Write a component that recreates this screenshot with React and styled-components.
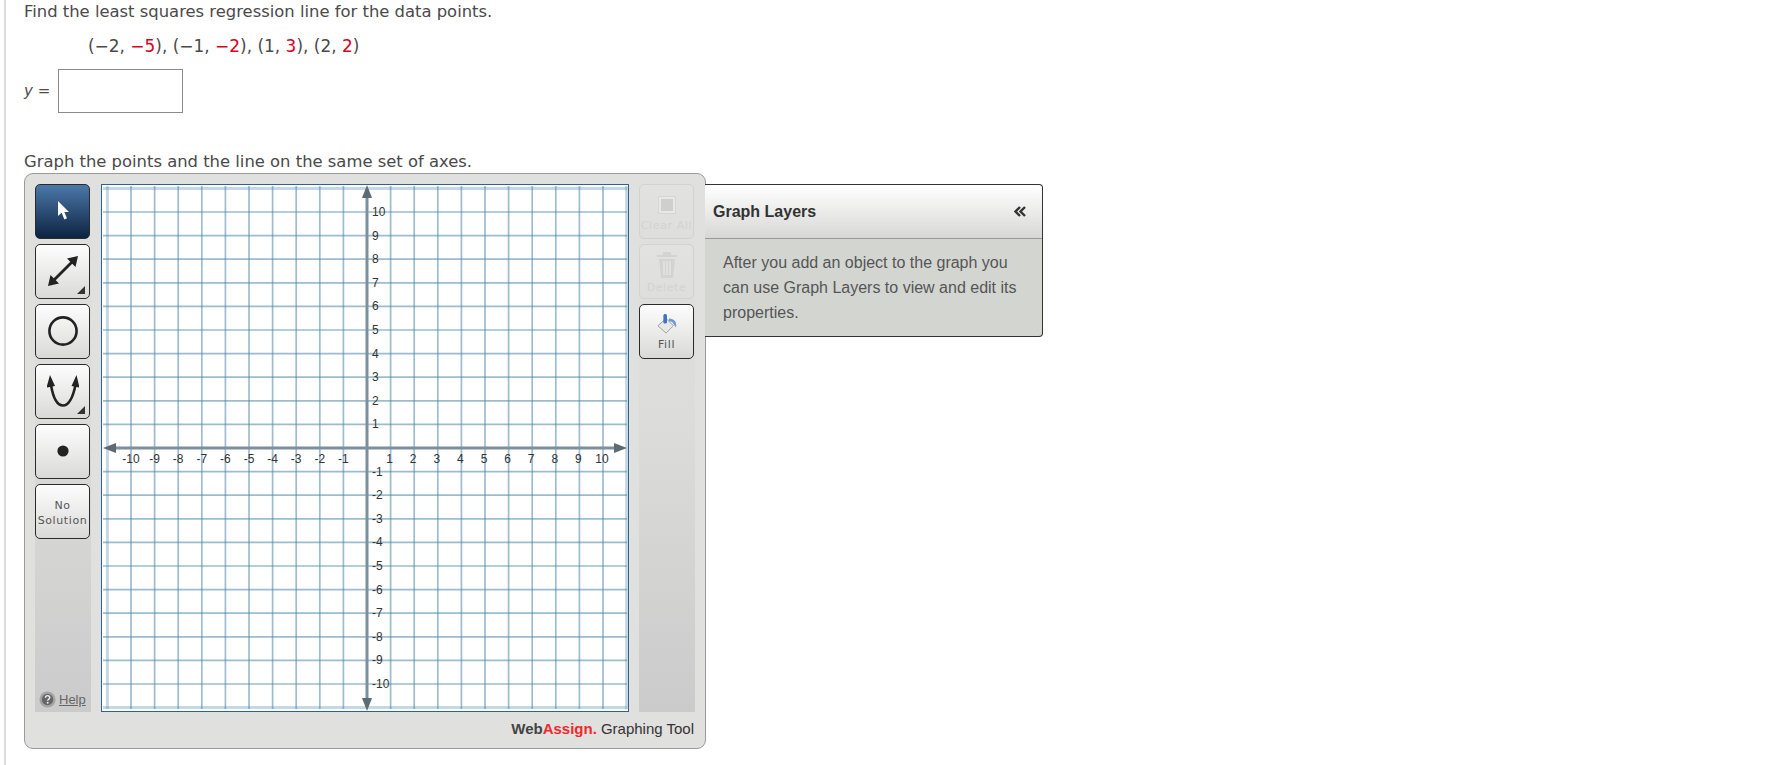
import React from 'react'
import styled, { createGlobalStyle } from 'styled-components'

const UNIT = 23.6
const ORIGIN_X = 265
const ORIGIN_Y = 263
const TICKS = [-10, -9, -8, -7, -6, -5, -4, -3, -2, -1, 1, 2, 3, 4, 5, 6, 7, 8, 9, 10]
const LINES = [-11, ...TICKS, 11]

const GlobalStyle = createGlobalStyle`
  html, body {
    margin: 0;
    background: #fff;
  }
`

const Page = styled.div`
  box-sizing: border-box;
  min-height: 765px;
  margin-left: 4px;
  padding-left: 18px;
  border-left: 2px solid #dcdcdc;
  font-family: "DejaVu Sans", Verdana, sans-serif;
  font-size: 16.4px;
  color: #4a4a4a;
`

const Question = styled.p`
  margin: 0;
  line-height: 22px;
`

const FirstQuestion = styled(Question)`
  padding-top: 1px;
`

const MathLine = styled.div`
  margin-top: 12px;
  padding-left: 64px;
  font-size: 16.95px;
  line-height: 22px;
`

const Red = styled.span`
  color: #d8001c;
`

const AnswerRow = styled.div`
  display: flex;
  align-items: center;
  gap: 8px;
  margin-top: 12px;
  height: 44px;
`

const Italic = styled.span`
  font-size: 15px;
  line-height: 22px;
  & i {
    font-family: "DejaVu Sans", sans-serif;
  }
`

const AnswerInput = styled.input`
  box-sizing: border-box;
  width: 125px;
  height: 44px;
  padding: 0;
  background: #fff;
  border: 1px solid #8a8a8a;
`

const GraphPrompt = styled(Question)`
  margin-top: 38px;
`

const Tool = styled.div`
  display: flex;
  align-items: flex-start;
`

const Panel = styled.div`
  box-sizing: border-box;
  width: 682px;
  height: 576px;
  padding: 10px 10px 0 10px;
  background: #e0e0de;
  border: 1px solid #9a9a9a;
  border-radius: 9px;
`

const Workspace = styled.div`
  display: flex;
  gap: 10px;
`

const ToolColumn = styled.div`
  display: flex;
  flex-direction: column;
  gap: 5.5px;
  width: 56px;
  height: 528px;
  flex: none;
  position: relative;
  background: linear-gradient(#e0e0de 0%, #dcdcdb 45%, #cbcbcb 100%);
`

const ToolButton = styled.button`
  box-sizing: border-box;
  position: relative;
  display: flex;
  flex-direction: column;
  align-items: center;
  justify-content: ${p => (p.$top === undefined ? 'center' : 'flex-start')};
  width: 55px;
  height: 54.5px;
  padding: ${p => p.$top || 0}px 0 0;
  border: 1px solid ${p => (p.$disabled ? '#d2d2d1' : '#2b2b2b')};
  border-radius: 5px;
  background: ${p =>
    p.$active
      ? 'linear-gradient(#4c78a9, #0c2341)'
      : p.$disabled
        ? 'linear-gradient(#e2e2e0, #dededc)'
        : 'linear-gradient(#fdfdfd, #d9dad8)'};
  font-family: "DejaVu Sans", Verdana, sans-serif;
  font-size: 11px;
  letter-spacing: 0.6px;
  line-height: 15px;
  color: ${p => (p.$disabled ? '#d3d3d2' : '#555')};
`

const ButtonLabel = styled.span`
  margin-top: ${p => p.$gap || 0}px;
  white-space: nowrap;
`

const SolutionText = styled.span`
  position: relative;
  top: 1.5px;
`

const Corner = styled.span`
  position: absolute;
  right: 4px;
  bottom: 4px;
  width: 0;
  height: 0;
  border-left: 8px solid transparent;
  border-bottom: 8px solid #333;
`

const Help = styled.div`
  position: absolute;
  left: 4px;
  bottom: 4px;
  display: flex;
  align-items: center;
  gap: 3px;
  font-family: "Liberation Sans", Arial, sans-serif;
  font-size: 13px;
  color: #666;
  text-decoration: underline;
`

const Graph = styled.svg`
  box-sizing: border-box;
  display: block;
  flex: none;
  width: 528px;
  height: 528px;
  background: #fff;
  border: 1px solid #2a6496;
`

const SideColumn = styled(ToolColumn)`
  align-items: flex-start;
`

const ToolFooter = styled.div`
  display: flex;
  justify-content: flex-end;
  gap: 4px;
  margin-top: 7px;
  padding-right: 1px;
  font-family: "Liberation Sans", Arial, sans-serif;
  font-size: 15px;
  line-height: 20px;
  color: #333;
`

const Brand = styled.b`
  color: #444;
  & span {
    color: #f0282d;
  }
`

const Layers = styled.div`
  box-sizing: border-box;
  width: 338px;
  margin-top: 11px;
  margin-left: -1px;
  border: 1px solid #333;
  border-left: 0;
  border-radius: 0 4px 4px 0;
  background: #d3d5d1;
  font-family: "Liberation Sans", Arial, sans-serif;
`

const LayersHeader = styled.div`
  display: flex;
  align-items: center;
  justify-content: space-between;
  box-sizing: border-box;
  height: 54px;
  padding: 0 16px 0 8px;
  background: linear-gradient(#fff, #d7d8d6);
  border-bottom: 1px solid #999;
  border-radius: 0 4px 0 0;
  font-size: 16px;
  font-weight: bold;
  color: #333;
`

const LayersBody = styled.div`
  padding: 11px 16px 11px 18px;
  font-size: 16px;
  line-height: 25px;
  color: #555;
`

const Term = ({ x, y }) => (
  <>
    ({x}, <Red>{y}</Red>)
  </>
)

const GridChart = () => (
  <Graph viewBox="0 0 526 526">
    {LINES.map(n => (
      <line
        key={`v${n}`}
        x1={ORIGIN_X + n * UNIT}
        x2={ORIGIN_X + n * UNIT}
        y1="1"
        y2="524"
        stroke="#4a86a8"
        strokeOpacity={Math.abs(n) === 11 ? 0.32 : 0.55}
        strokeWidth={Math.abs(n) === 11 ? 3 : 1.7}
      />
    ))}
    {LINES.map(n => (
      <line
        key={`h${n}`}
        x1="1"
        x2="525"
        y1={ORIGIN_Y + n * UNIT}
        y2={ORIGIN_Y + n * UNIT}
        stroke="#4a86a8"
        strokeOpacity={Math.abs(n) === 11 ? 0.32 : 0.55}
        strokeWidth={Math.abs(n) === 11 ? 3 : 1.7}
      />
    ))}
    <line x1={ORIGIN_X} x2={ORIGIN_X} y1="8" y2="518" stroke="#7c8f9b" strokeWidth="3" />
    <line x1="8" x2="518" y1={ORIGIN_Y} y2={ORIGIN_Y} stroke="#7c8f9b" strokeWidth="3" />
    <path d="M265 0l5 13h-10z" fill="#5f6b74" />
    <path d="M265 526l5-13h-10z" fill="#5f6b74" />
    <path d="M1 263l13-5v10z" fill="#5f6b74" />
    <path d="M525 263l-13-5v10z" fill="#5f6b74" />
    <g fontFamily="Liberation Sans, Arial, sans-serif" fontSize="12" fill="#333">
      {TICKS.map(n => (
        <text key={`x${n}`} x={ORIGIN_X + n * UNIT - (n > 0 ? 1 : 0)} y={ORIGIN_Y + 15} textAnchor="middle">
          {n}
        </text>
      ))}
      {TICKS.map(n => (
        <text key={`y${n}`} x={ORIGIN_X + 5} y={ORIGIN_Y - n * UNIT + 4}>
          {n}
        </text>
      ))}
    </g>
  </Graph>
)

const App = () => (
  <Page>
    <GlobalStyle />
    <FirstQuestion>Find the least squares regression line for the data points.</FirstQuestion>
    <MathLine>
      <Term x="−2" y="−5" />, <Term x="−1" y="−2" />, <Term x="1" y="3" />, <Term x="2" y="2" />
    </MathLine>
    <AnswerRow>
      <Italic>
        <i>y</i> =
      </Italic>
      <AnswerInput type="text" />
    </AnswerRow>
    <GraphPrompt>Graph the points and the line on the same set of axes.</GraphPrompt>
    <Tool>
      <Panel>
        <Workspace>
          <ToolColumn>
            <ToolButton $active>
              <svg width="14" height="22" viewBox="0 0 14 22">
                <path d="M2 1v15l3.600-3.200 2.800 6.600 2.600-1.100-2.700-6.400H13z" fill="#fff" />
              </svg>
            </ToolButton>
            <ToolButton>
              <svg width="32" height="32" viewBox="0 0 32 32">
                <path d="M6 26L26 6" stroke="#222" strokeWidth="2.800" />
                <path d="M31 1l-11 2.500 8.500 8.500zM1 31l2.500-11 8.500 8.500z" fill="#222" />
              </svg>
              <Corner />
            </ToolButton>
            <ToolButton>
              <svg width="32" height="32" viewBox="0 0 32 32">
                <circle cx="16" cy="16" r="13.600" fill="none" stroke="#222" strokeWidth="2.600" />
              </svg>
            </ToolButton>
            <ToolButton>
              <svg width="32" height="33" viewBox="0 0 32 33">
                <path d="M4 10C6 22 10 30.500 16 30.500S26 22 28.500 10" fill="none" stroke="#222" strokeWidth="2.600" />
                <path d="M3 0L-.5 12.500l8.500-1.500zM29.500 0L24.500 11l8 1.500z" fill="#222" />
              </svg>
              <Corner />
            </ToolButton>
            <ToolButton>
              <svg width="12" height="12" viewBox="0 0 12 12">
                <circle cx="6" cy="6" r="5.600" fill="#222" />
              </svg>
            </ToolButton>
            <ToolButton>
              <SolutionText>No</SolutionText>
              <SolutionText>Solution</SolutionText>
            </ToolButton>
            <Help>
              <svg width="17" height="17" viewBox="0 0 18 18">
                <circle cx="9" cy="9" r="8.500" fill="#a4a4a4" />
                <circle cx="9" cy="9" r="6" fill="#666" />
                <path d="M6.800 7.200c0-3 4.600-3 4.600-.2 0 1.700-2.200 1.800-2.200 3.400" fill="none" stroke="#eee" strokeWidth="1.500" />
                <circle cx="9.200" cy="12.500" r="1" fill="#eee" />
              </svg>
              Help
            </Help>
          </ToolColumn>
          <GridChart />
          <SideColumn>
            <ToolButton $disabled $top={11}>
              <svg width="18" height="18" viewBox="0 0 18 18">
                <rect x="0.500" y="0.500" width="17" height="17" fill="#e8e8e7" stroke="#d6d6d5" />
                <rect x="3" y="3" width="12" height="12" fill="#cfcfce" />
              </svg>
              <ButtonLabel $gap={4}>Clear All</ButtonLabel>
            </ToolButton>
            <ToolButton $disabled $top={6}>
              <svg width="22" height="28" viewBox="0 0 22 28">
                <path d="M1 4h20v2H1zM7 1h8v3H7z" fill="#d3d3d2" />
                <path d="M3 8h16l-2 19H5z" fill="#d3d3d2" />
                <path d="M8 10v14M11 10v14M14 10v14" stroke="#e6e6e5" strokeWidth="1.400" />
              </svg>
              <ButtonLabel $gap={1}>Delete</ButtonLabel>
            </ToolButton>
            <ToolButton $top={8}>
              <svg width="22" height="21" viewBox="0 0 24 23">
                <path d="M2 14l9-8 8 8-8 8z" fill="#e8e8e8" stroke="#9a9a9a" strokeWidth="1" />
                <path d="M8 10V3c0-2.500 4-2.500 4 0v7c0 2-4 2-4 0z" fill="#3f74c4" />
                <path d="M14 6c6 0 9 4 8 10l-3-4c-.5-2-2-3-5-3z" fill="#6a9bd6" />
              </svg>
              <ButtonLabel $gap={2.500}>Fill</ButtonLabel>
            </ToolButton>
          </SideColumn>
        </Workspace>
        <ToolFooter>
          <Brand>
            Web<span>Assign.</span>
          </Brand>
          <span>Graphing Tool</span>
        </ToolFooter>
      </Panel>
      <Layers>
        <LayersHeader>
          Graph Layers
          <svg width="12" height="11" viewBox="0 0 12 11">
            <path d="M6 1L1.500 5.500 6 10M11 1L6.500 5.500 11 10" fill="none" stroke="#333" strokeWidth="2.400" />
          </svg>
        </LayersHeader>
        <LayersBody>
          After you add an object to the graph you can use Graph Layers to view and edit its properties.
        </LayersBody>
      </Layers>
    </Tool>
  </Page>
)

export default App
